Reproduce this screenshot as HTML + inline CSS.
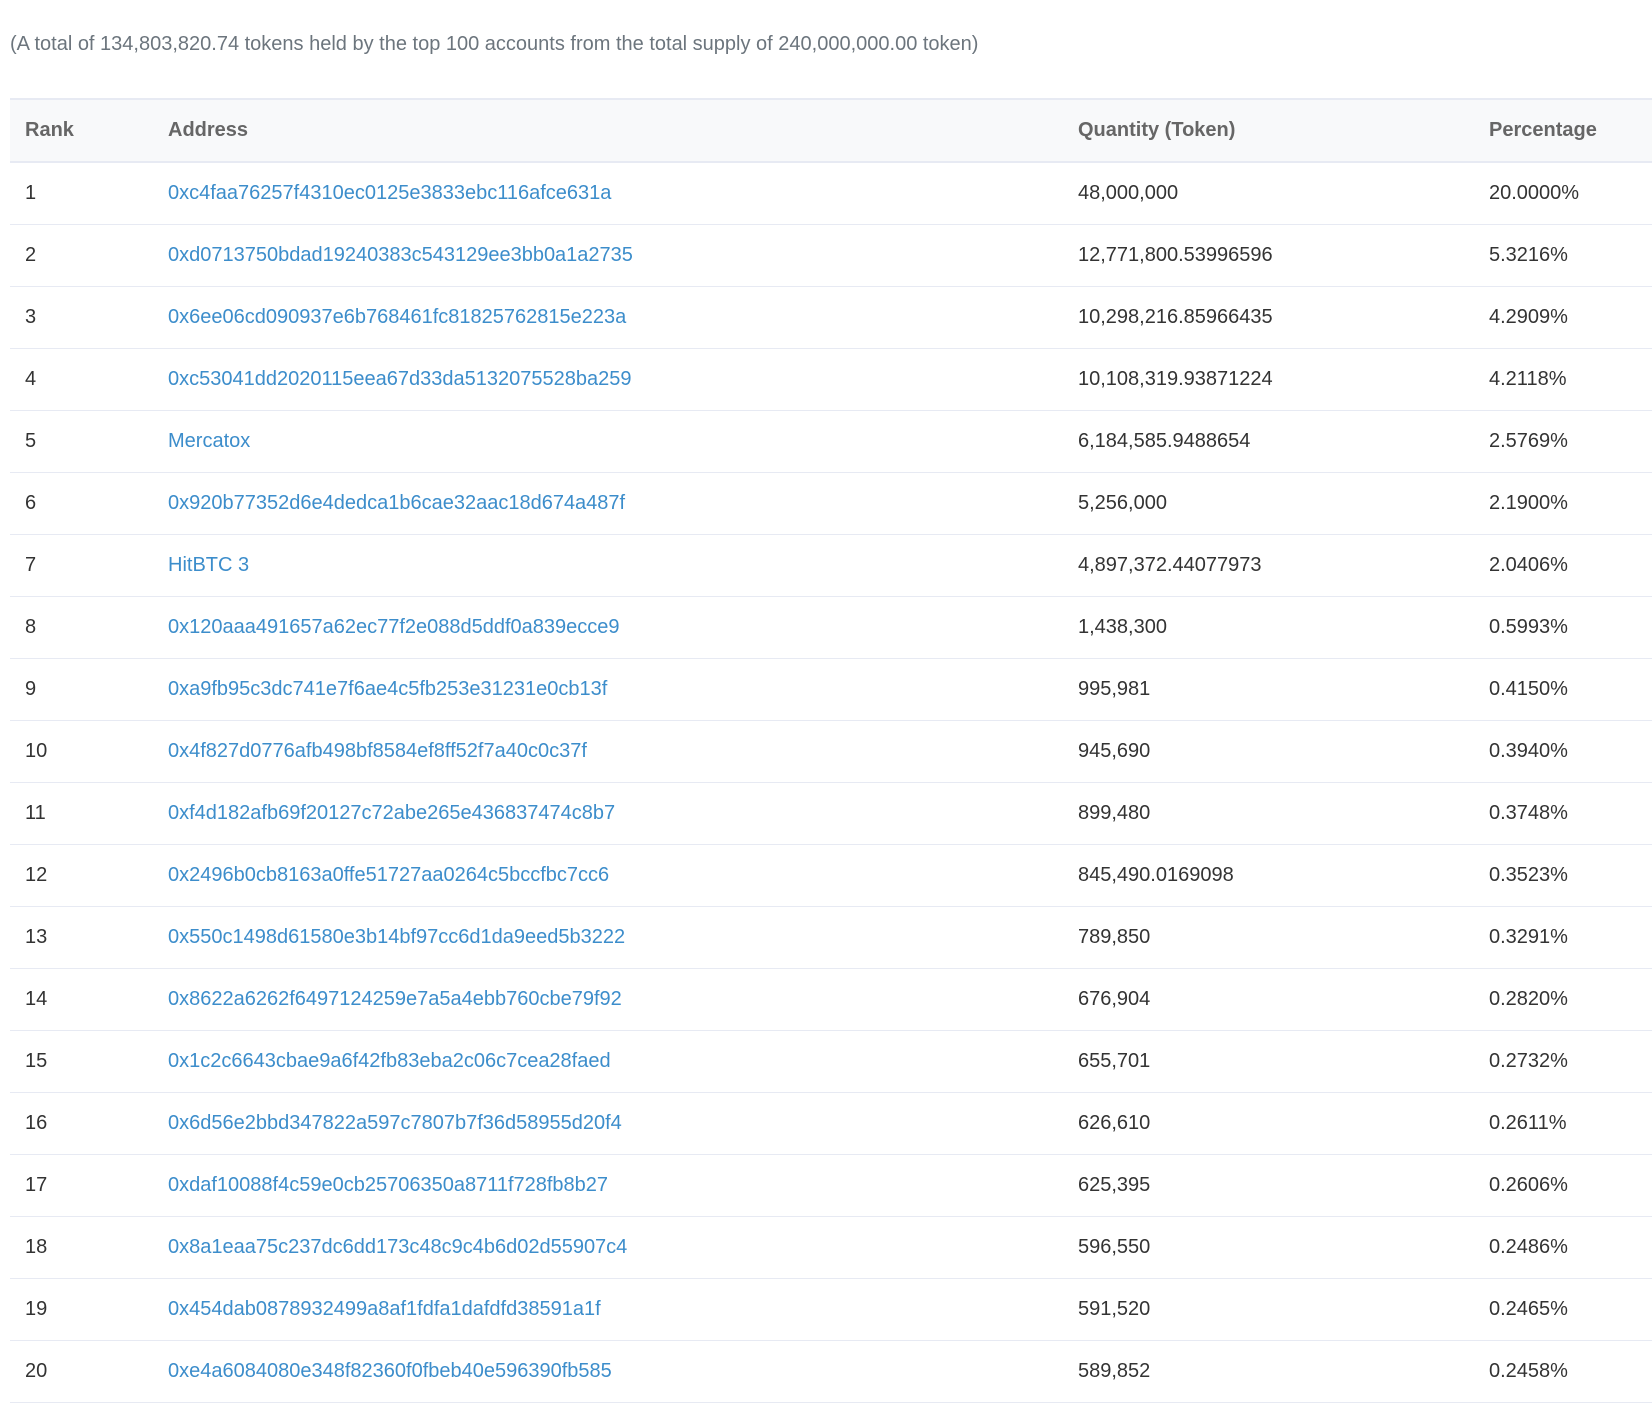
<!DOCTYPE html>
<html><head><meta charset="utf-8"><style>
body{margin:0;background:#fff;font-family:"Liberation Sans",Arial,sans-serif;color:#333;width:1652px;height:1402px;overflow:hidden}
.cap{position:absolute;left:10px;top:33px;font-size:20px;color:#6c757d;white-space:nowrap}
table{position:absolute;left:10px;top:98px;width:1642px;border-collapse:collapse;font-size:20px}
th{background:#f8f9fa;height:61px;text-align:left;font-weight:bold;color:#666;border-top:2px solid #e7eaf3;border-bottom:2px solid #e7eaf3;padding:0}
td{height:61px;border-bottom:1.2px solid #e7eaf3;padding:0;white-space:nowrap}
.c1{padding-left:15px;width:143px}.c2{width:910px}.c3{width:411px}
a{color:#3c8dcb;text-decoration:none}
</style></head><body>
<div class="cap">(A total of 134,803,820.74 tokens held by the top 100 accounts from the total supply of 240,000,000.00 token)</div>
<table>
<tr><th class="c1">Rank</th><th class="c2">Address</th><th class="c3">Quantity (Token)</th><th>Percentage</th></tr>
<tr><td class="c1">1</td><td><a>0xc4faa76257f4310ec0125e3833ebc116afce631a</a></td><td>48,000,000</td><td>20.0000%</td></tr>
<tr><td class="c1">2</td><td><a>0xd0713750bdad19240383c543129ee3bb0a1a2735</a></td><td>12,771,800.53996596</td><td>5.3216%</td></tr>
<tr><td class="c1">3</td><td><a>0x6ee06cd090937e6b768461fc81825762815e223a</a></td><td>10,298,216.85966435</td><td>4.2909%</td></tr>
<tr><td class="c1">4</td><td><a>0xc53041dd2020115eea67d33da5132075528ba259</a></td><td>10,108,319.93871224</td><td>4.2118%</td></tr>
<tr><td class="c1">5</td><td><a>Mercatox</a></td><td>6,184,585.9488654</td><td>2.5769%</td></tr>
<tr><td class="c1">6</td><td><a>0x920b77352d6e4dedca1b6cae32aac18d674a487f</a></td><td>5,256,000</td><td>2.1900%</td></tr>
<tr><td class="c1">7</td><td><a>HitBTC 3</a></td><td>4,897,372.44077973</td><td>2.0406%</td></tr>
<tr><td class="c1">8</td><td><a>0x120aaa491657a62ec77f2e088d5ddf0a839ecce9</a></td><td>1,438,300</td><td>0.5993%</td></tr>
<tr><td class="c1">9</td><td><a>0xa9fb95c3dc741e7f6ae4c5fb253e31231e0cb13f</a></td><td>995,981</td><td>0.4150%</td></tr>
<tr><td class="c1">10</td><td><a>0x4f827d0776afb498bf8584ef8ff52f7a40c0c37f</a></td><td>945,690</td><td>0.3940%</td></tr>
<tr><td class="c1">11</td><td><a>0xf4d182afb69f20127c72abe265e436837474c8b7</a></td><td>899,480</td><td>0.3748%</td></tr>
<tr><td class="c1">12</td><td><a>0x2496b0cb8163a0ffe51727aa0264c5bccfbc7cc6</a></td><td>845,490.0169098</td><td>0.3523%</td></tr>
<tr><td class="c1">13</td><td><a>0x550c1498d61580e3b14bf97cc6d1da9eed5b3222</a></td><td>789,850</td><td>0.3291%</td></tr>
<tr><td class="c1">14</td><td><a>0x8622a6262f6497124259e7a5a4ebb760cbe79f92</a></td><td>676,904</td><td>0.2820%</td></tr>
<tr><td class="c1">15</td><td><a>0x1c2c6643cbae9a6f42fb83eba2c06c7cea28faed</a></td><td>655,701</td><td>0.2732%</td></tr>
<tr><td class="c1">16</td><td><a>0x6d56e2bbd347822a597c7807b7f36d58955d20f4</a></td><td>626,610</td><td>0.2611%</td></tr>
<tr><td class="c1">17</td><td><a>0xdaf10088f4c59e0cb25706350a8711f728fb8b27</a></td><td>625,395</td><td>0.2606%</td></tr>
<tr><td class="c1">18</td><td><a>0x8a1eaa75c237dc6dd173c48c9c4b6d02d55907c4</a></td><td>596,550</td><td>0.2486%</td></tr>
<tr><td class="c1">19</td><td><a>0x454dab0878932499a8af1fdfa1dafdfd38591a1f</a></td><td>591,520</td><td>0.2465%</td></tr>
<tr><td class="c1">20</td><td><a>0xe4a6084080e348f82360f0fbeb40e596390fb585</a></td><td>589,852</td><td>0.2458%</td></tr>
</table>
</body></html>
